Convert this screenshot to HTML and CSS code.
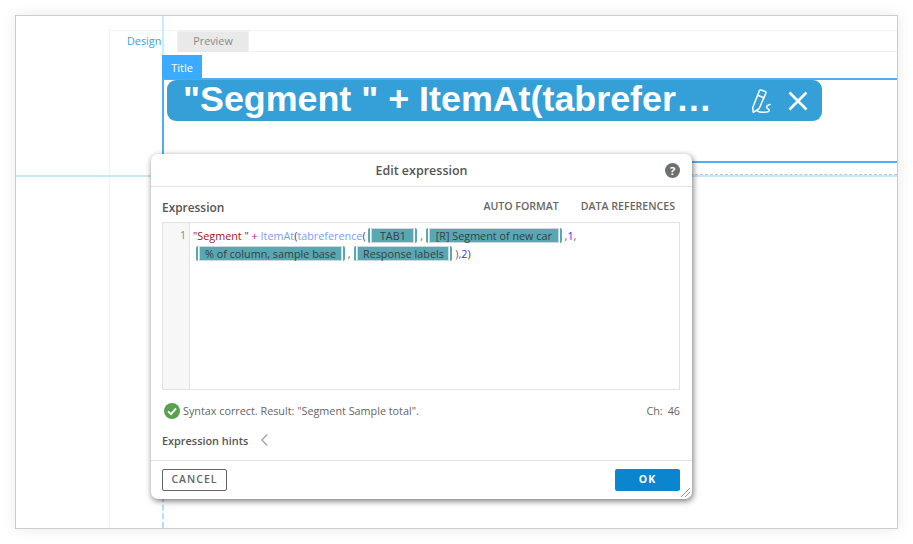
FILE: index.html
```html
<!DOCTYPE html>
<html lang="en">
<head>
<meta charset="utf-8">
<title>Edit expression</title>
<link rel="stylesheet" href="styles.css">
</head>
<body>
<main class="frame">
  <div class="page-outline"></div>
  <nav class="tabs">
    <span class="tab tab-active">Design</span>
    <span class="tab tab-idle">Preview</span>
    <span class="tabs-rest"></span>
  </nav>
  <div class="guide guide-v-top"></div>
  <div class="guide guide-h"></div>
  <div class="guide guide-h-dash"></div>
  <div class="guide guide-v-dash"></div>
  <div class="title-box"></div>
  <div class="title-tag">Title</div>
  <div class="pill">
    <span class="pill-text">"Segment " + ItemAt(tabrefer…</span>
    <svg class="pill-edit" width="24" height="26" viewBox="0 0 24 26" fill="none" stroke="#fff" stroke-width="1.5" stroke-linejoin="round" stroke-linecap="round">
      <path d="M9.6 2.2 Q10 1.8 11 2 L15 3.4 Q16.4 4 15.8 5.2 L9.3 20.3 L3.3 24.3 L2.7 19.7 Z"/>
      <path d="M7.6 7.2 L14 9.8"/>
      <path d="M7.3 23 Q10 24.6 13.3 24.3 Q18.6 24.4 19.2 22.8 Q19.4 21.4 17.4 20.4 Q15.8 19 17.4 17.6 Q18.4 16.6 20 16.4"/>
    </svg>
    <svg class="pill-close" width="20" height="20" viewBox="0 0 20 20" fill="none" stroke="#fff" stroke-width="2.6">
      <path d="M1.5 1.5 L18.5 18.5 M18.5 1.5 L1.5 18.5"/>
    </svg>
  </div>

  <section class="dialog">
    <header class="dialog-head">
      <h1 class="dialog-title">Edit expression</h1>
      <span class="help">?</span>
    </header>
    <div class="dialog-body">
      <div class="expr-bar">
        <span class="expr-label">Expression</span>
        <span class="expr-actions"><span>AUTO FORMAT</span><span>DATA REFERENCES</span></span>
      </div>
      <div class="editor">
        <div class="gutter">1</div>
        <div class="code">
          <div class="code-line"><span class="c-str">"Segment "</span> <span class="c-op">+</span> <span class="c-fn">ItemAt</span>(<span class="c-fn">tabreference</span>( <span class="chip chip-tab"><span class="chip-in">TAB1</span></span> <span class="c-sep">,</span> <span class="chip chip-seg"><span class="chip-in">[R] Segment of new car</span></span> <span class="c-sep">,</span><span class="c-num">1</span><span class="c-sep">,</span></div>
          <div class="code-line"><span class="chip chip-col"><span class="chip-in">% of column, sample base</span></span> <span class="c-sep">,</span> <span class="chip chip-res"><span class="chip-in">Response labels</span></span> <span class="c-sep">)</span><span class="c-sep">,</span><span class="c-num">2</span>)</div>
        </div>
      </div>
      <div class="status">
        <svg class="ok-icon" width="16" height="16" viewBox="0 0 16 16">
          <circle cx="8" cy="8" r="8" fill="#5aa14f"/>
          <path d="M4 8.4 L7 11.2 L12 5.4" fill="none" stroke="#fff" stroke-width="1.9"/>
        </svg>
        <span class="status-text">Syntax correct. Result: "Segment Sample total".</span>
        <span class="count"><span>Ch:</span><span>46</span></span>
      </div>
      <div class="hints">
        <span>Expression hints</span>
        <svg width="7" height="12" viewBox="0 0 7 12" fill="none" stroke="#999" stroke-width="1.1"><path d="M6.2 0.5 L0.8 6 L6.2 11.5"/></svg>
      </div>
    </div>
    <footer class="dialog-foot">
      <button class="btn btn-cancel" type="button">CANCEL</button>
      <button class="btn btn-ok" type="button">OK</button>
      <svg class="grip" width="11" height="11" viewBox="0 0 11 11" stroke="#999" stroke-width="1"><path d="M1 10 L10 1 M5 10 L10 5"/></svg>
    </footer>
  </section>
</main>
</body>
</html>
```
FILE: styles.css
```css
* { box-sizing: border-box; }
html, body { margin: 0; padding: 0; background: #fff; }
body { width: 913px; height: 544px; overflow: hidden; font-family: "Open Sans", sans-serif; color: #555; }

.frame {
  position: relative;
  width: 883px;
  height: 514px;
  margin: 15px 0 0 15px;
  border: 1px solid #ccc;
  background: #fff;
  box-shadow: 0 0 14px rgba(0, 0, 0, 0.09);
  overflow: hidden;
}

.page-outline {
  position: absolute;
  left: 93px; top: 14px; right: -2px; bottom: -2px;
  border: 1px solid #f0f3f5;
}

.tabs {
  position: absolute;
  left: 94px; top: 15px; right: 0;
  height: 21px;
  display: flex;
  font-size: 10.8px;
  line-height: 20px;
}
.tab { display: block; text-align: center; }
.tab-active { width: 67px; padding-left: 17px; text-align: left; color: #3d9fd6; }
.tab-idle { width: 72px; height: 21px; background: #e9e9e9; color: #8a8a8a; line-height: 18px; border: 1px solid #f0f0f0; border-bottom: 0; }
.tabs-rest { flex: 1; border-bottom: 1px solid #f0f0f0; }

.guide { position: absolute; }
.guide-v-top { left: 146px; top: 0; width: 2px; height: 40px; background: #cfeafb; }
.guide-h { left: 0; right: 0; top: 159px; height: 2px; background: #c8e8fa; }
.guide-h-dash { left: 530px; right: 0; top: 158px; height: 1px; border-top: 1px dashed #b9c4cb; }
.guide-v-dash { left: 146px; top: 480px; bottom: 0; width: 2px; border-left: 2px dashed #b6dff6; }

.title-box {
  position: absolute;
  left: 146px; top: 62px; right: -4px;
  height: 85px;
  border: 2px solid #4db0f2;
}
.title-tag {
  position: absolute;
  left: 146px; top: 39px;
  width: 40px; height: 24px;
  background: #3babff;
  color: #fff;
  font-size: 11px;
  line-height: 25px;
  text-align: center;
}

.pill {
  position: absolute;
  left: 151px; top: 64px;
  width: 655px; height: 41px;
  background: #35a0d8;
  border-radius: 9px;
  display: flex;
  align-items: center;
  padding-left: 16px;
}
.pill-text {
  width: 562px;
  color: #fff;
  font-family: "Liberation Sans", Arial, sans-serif;
  font-weight: 700;
  font-size: 35.85px;
  line-height: 39px;
  padding-bottom: 2px;
  white-space: nowrap;
}
.pill-edit { margin-left: 5px; }
.pill-close { margin-left: 14px; }

.dialog {
  position: absolute;
  left: 135px; top: 138px;
  width: 541px; height: 345px;
  background: #fff;
  border-radius: 7px;
  box-shadow: 1px 2px 6px rgba(0, 0, 0, 0.55);
  display: flex;
  flex-direction: column;
}
.dialog-head {
  position: relative;
  height: 33px;
  flex: none;
  display: flex;
  align-items: center;
  justify-content: center;
  border-bottom: 1px solid #e2e2e2;
}
.dialog-title { margin: 0; font-size: 12.5px; font-weight: 600; color: #555; }
.help {
  position: absolute;
  right: 12px; top: 9px;
  width: 15px; height: 15px;
  border-radius: 50%;
  background: #6f6f6f;
  color: #fff;
  font-size: 11px;
  font-weight: 700;
  line-height: 15px;
  text-align: center;
}

.dialog-body { flex: 1; padding: 0 12px 0 11px; display: flex; flex-direction: column; }
.expr-bar { height: 35px; flex: none; display: flex; align-items: center; justify-content: space-between; padding-top: 4px; }
.expr-label { font-size: 11.9px; font-weight: 600; color: #555; }
.expr-actions { display: flex; gap: 22px; padding-right: 5px; padding-bottom: 1px; font-size: 10.6px; font-weight: 600; color: #666; }

.editor { height: 168px; flex: none; display: flex; border: 1px solid #e2e2e2; }
.gutter {
  width: 27px; flex: none;
  background: #f7f7f7;
  border-right: 1px solid #e2e2e2;
  padding: 3px 3px 0 0;
  text-align: right;
  font-size: 10.5px;
  line-height: 18px;
  color: #888;
}
.code { flex: 1; padding: 5px 0 0 3px; font-size: 10.8px; color: #444; white-space: nowrap; }
.code-line { height: 18px; line-height: 16px; }
.c-str { color: #a11; }
.c-op { color: #a0a; }
.c-fn { color: #7a9ff0; }
.c-num { color: #3a2cf0; }
.c-sep { color: #666; }
.chip {
  display: inline-block;
  height: 15px;
  vertical-align: top;
  padding: 0 1px;
  border: 2px solid #57a8b3;
  border-width: 0 2px;
  border-radius: 2px;
}
.chip-in {
  display: block;
  height: 15px;
  line-height: 14px;
  text-align: center;
  background: #57a8b3;
  color: #3a3f40;
  border: 1px solid #cdd9db;
}
.chip-tab { width: 49px; }
.chip-seg { width: 136px; }
.chip-col { width: 149px; margin-left: 3px; }
.chip-res { width: 98px; margin-left: 1px; }

.status { height: 41px; flex: none; display: flex; align-items: center; font-size: 10.8px; color: #666; padding: 0 0 0 2px; }
.ok-icon { flex: none; margin-right: 3px; }
.status-text { flex: 1; }
.count { display: flex; gap: 5px; }

.hints { height: 18px; flex: none; display: flex; align-items: center; gap: 13px; font-size: 10.9px; font-weight: 600; color: #555; }

.dialog-foot {
  position: relative;
  height: 39px;
  flex: none;
  margin-top: auto;
  display: flex;
  align-items: flex-start;
  justify-content: space-between;
  padding: 8px 12px 0 11px;
  border-top: 1px solid #e2e2e2;
}
.btn { width: 65px; height: 22px; padding: 0 0 2px; font-family: inherit; font-size: 10.5px; font-weight: 600; letter-spacing: 1px; border-radius: 2px; }
.btn-cancel { background: #fff; border: 1px solid #666; color: #666; }
.btn-ok { background: #0a86ce; border: 0; color: #fff; font-weight: 700; }
.grip { position: absolute; right: 1px; bottom: 1px; }
```
